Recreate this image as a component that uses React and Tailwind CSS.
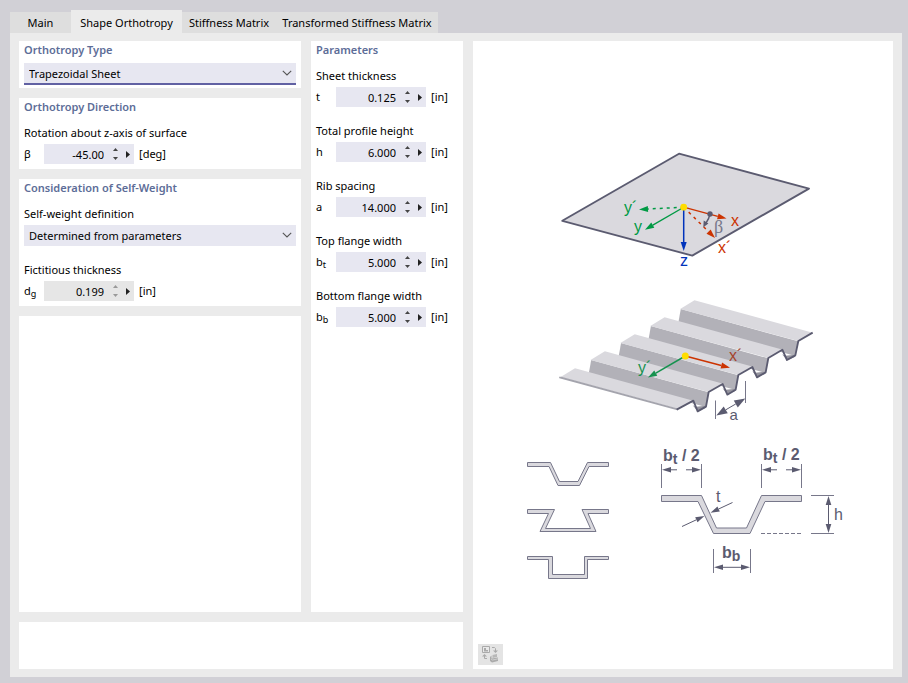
import React, { useId } from "react";
import clsx from "clsx";

const tabs = [
  { label: "Main", width: "w-[61px]" },
  { label: "Shape Orthotropy", width: "w-[111px]", active: true },
  { label: "Stiffness Matrix", width: "w-[94px]" },
  { label: "Transformed Stiffness Matrix", width: "w-[162px]" },
];

const parameters = [
  { label: "Sheet thickness", symbol: "t", value: "0.125" },
  { label: "Total profile height", symbol: "h", value: "6.000" },
  { label: "Rib spacing", symbol: "a", value: "14.000" },
  { label: "Top flange width", symbol: "b", sub: "t", value: "5.000" },
  { label: "Bottom flange width", symbol: "b", sub: "b", value: "5.000" },
];

function Card({ title, className, children }) {
  return (
    <section className={clsx("bg-white px-[5px]", className)}>
      {title && <h2 className="h-[18px] font-semibold leading-[18px] text-[#5d6d98]">{title}</h2>}
      {children}
    </section>
  );
}

function NumberField({ label, symbol, sub, value, unit = "in", disabled }) {
  const id = useId();
  return (
    <div className="flex flex-col gap-[3px]">
      <label htmlFor={id} className="h-4 leading-4">{label}</label>
      <div className="flex h-5 items-center">
        <span className="flex w-5 shrink-0 items-baseline">
          {symbol}
          {sub && <span className="pt-[2px] text-[9px] leading-none translate-y-[2px]">{sub}</span>}
        </span>
        <div className={clsx("flex h-5 w-[90px] items-center", disabled ? "bg-[#e6e6e6]" : "bg-[#e7e7f1]")}>
          <input id={id} defaultValue={value} readOnly={disabled} className="h-5 w-[60px] bg-transparent pt-px text-right outline-none" />
          <span className="ml-[9px] flex h-5 w-[5px] flex-col items-center justify-center gap-[6px]">
            <button aria-label={`Increase ${label}`} className="block">
              <svg width="5" height="3" viewBox="0 0 5 3" className="block"><path d="M2.5 0 5 3H0Z" fill={disabled ? "#999" : "#444"} /></svg>
            </button>
            <button aria-label={`Decrease ${label}`} className="block">
              <svg width="5" height="3" viewBox="0 0 5 3" className="block"><path d="M2.5 3 5 0H0Z" fill={disabled ? "#999" : "#444"} /></svg>
            </button>
          </span>
          <button aria-label={`Options for ${label}`} className="ml-2 block">
            <svg width="4" height="7" viewBox="0 0 4 7" className="block"><path d="M0 0 4 3.5 0 7Z" fill="#222" /></svg>
          </button>
        </div>
        <span className="ml-[5px]">[{unit}]</span>
      </div>
    </div>
  );
}

function Dropdown({ id, value, focused, label }) {
  return (
    <div className={clsx("relative bg-[#e7e7f1]", focused ? "h-[22px] border-b-2 border-[#6161a3]" : "h-[21px]")}>
      <select id={id} aria-label={label} className="block h-full w-full appearance-none bg-transparent pl-[5px] pr-6 pt-[2px] outline-none">
        <option>{value}</option>
      </select>
      <svg width="10" height="6" viewBox="0 0 10 6" className="pointer-events-none absolute right-1 top-[7px]">
        <path d="M.8.8 5 5 9.2.8" fill="none" stroke="#555" strokeWidth="1.1" />
      </svg>
    </div>
  );
}

function Arrow({ from, to, color, size = 9, half = 3, dash, width = 1.3 }) {
  const dx = to[0] - from[0];
  const dy = to[1] - from[1];
  const len = Math.hypot(dx, dy);
  const ux = dx / len;
  const uy = dy / len;
  const bx = to[0] - ux * size;
  const by = to[1] - uy * size;
  return (
    <g>
      <line x1={from[0]} y1={from[1]} x2={bx} y2={by} stroke={color} strokeWidth={width} strokeDasharray={dash} />
      <polygon points={`${to[0]},${to[1]} ${bx - uy * half},${by + ux * half} ${bx + uy * half},${by - ux * half}`} fill={color} />
    </g>
  );
}

const INK = "#5b5b70";
const GREEN = "#009a44";
const RED = "#cc3300";
const BLUE = "#0033bb";

function Plate() {
  return (
    <g>
      <polygon points="562.3,220.8 679,153.7 809,188.6 692.3,255.6" fill="#dad9de" stroke={INK} strokeWidth="1.9" strokeLinejoin="round" />
      <Arrow from={[683.7, 207.2]} to={[639, 209.4]} color={GREEN} dash="3 4" width={1.5} />
      <Arrow from={[683.7, 207.2]} to={[645, 229.7]} color={GREEN} />
      <Arrow from={[683.7, 207.2]} to={[715, 238]} color={RED} dash="3 4" width={1.5} />
      <Arrow from={[683.7, 207.2]} to={[726.5, 218.6]} color={RED} />
      <Arrow from={[683.7, 207.2]} to={[683.7, 251]} color={BLUE} width={1.5} />
      <circle cx="710" cy="214" r="2.7" fill={INK} />
      <path d="M710 214Q709 219 706 223" fill="none" stroke={INK} strokeWidth="1.4" />
      <path d="M703.3 227.3 703.7 220.5 708.4 223.4Z" fill={INK} />
      <circle cx="683.7" cy="207.2" r="3.4" fill="#ffdd00" />
      <g fontSize="16">
        <text x="624" y="213" fill={GREEN}>y´</text>
        <text x="634" y="232" fill={GREEN}>y</text>
        <text x="731" y="226" fill={RED}>x</text>
        <text x="718" y="253" fill={RED}>x´</text>
        <text x="680" y="266" fill={BLUE}>z</text>
        <text x="714" y="233" fill="#77778a" fontSize="18" className="font-['Liberation_Serif',serif]">β</text>
      </g>
    </g>
  );
}

const ribs = [4, 3, 2, 1, 0];

function RibbedSheet() {
  return (
    <g>
      <g transform="translate(550 290) scale(.33333)">
        {ribs.map((k) => (
          <g key={k} transform={`translate(${k * 89.6} ${k * -51})`}>
            {k > 0 && <polygon points="34,261 386,358 378,402 26,305" fill="#b2b1b8" />}
            <polygon points="32,261 75,235 430,332 386,357" fill="#dad9de" />
          </g>
        ))}
        {[0, 1, 2, 3].map((k) => (
          <polygon key={k} transform={`translate(${k * 89.4} ${k * -51})`} points="428,346 437,350 469,347 466,354 443,364" fill="#94939d" />
        ))}
        <polygon points="27,260 34,260 386,356 382,361 28,265" fill="#a4a4ad" />
        <polyline
          points="380,359 430,332 443,364 468,350 476,306 518,282 532,314 557,299 565,255 607,231 621,262 647,247 655,204 697,179 711,210 736,196 745,153 788,128"
          fill="none" stroke={INK} strokeWidth="5.5" strokeLinejoin="round"
        />
      </g>
      <Arrow from={[685.3, 356]} to={[730, 367.8]} color={RED} width={1.6} />
      <Arrow from={[685.3, 356]} to={[648, 377.6]} color="#16924f" width={1.5} />
      <circle cx="685.3" cy="356" r="3.5" fill="#ffdd00" />
      <text x="638" y="373" fontSize="16" fill="#16924f">y´</text>
      <text x="729" y="361" fontSize="16" fill="#a5432c">x´</text>
      <path d="M715.5 400.5V419M745.5 381V403" stroke="#77778a" />
      <Arrow from={[730, 407.3]} to={[716.3, 415.5]} color={INK} size={11} half={4} width={1} />
      <Arrow from={[730, 407.3]} to={[745.3, 398.5]} color={INK} size={11} half={4} width={1} />
      <text x="729.5" y="420" fontSize="15" fill={INK}>a</text>
    </g>
  );
}

function Profiles() {
  return (
    <g fill="#dad9de" stroke="#77778a" strokeWidth="1">
      <path d="M527.5 462.5H550.5L559.5 481.5H578L587.5 462.5H608.5V466.5H589L579.5 485.5H558L549 466.5H527.5Z" />
      <path d="M527.5 509.5H554.5L545.5 528.5H590.5L582 509.5H608.5V513.5H588L596 531.5H540L548.5 513.5H527.5Z" />
      <path d="M527.5 556.5H552.5V574.5H584.5V556.5H608.5V559.5H587.5V578.5H548.5V559.5H527.5Z" />
    </g>
  );
}

function SectionDimensions() {
  return (
    <g>
      <path d="M661.5 495.5H701.5L716.5 528H746.5L761.5 495.5H801.5V501.5H765L750 533.5H713.5L698 501.5H661.5Z" fill="#dad9de" stroke="#77778a" />
      <path d="M661.5 464V488M701.5 464V488M761.5 464V488M801.5 464V488M713.5 549V573M750.5 549V573M811 495.5H834M811 533.5H834" fill="none" stroke="#77778a" />
      <path d="M761 533.5H801" stroke="#77778a" strokeDasharray="4 2" />
      <Arrow from={[677, 469.8]} to={[662, 469.8]} color={INK} width={1} half={2.8} />
      <Arrow from={[686, 469.8]} to={[701, 469.8]} color={INK} width={1} half={2.8} />
      <Arrow from={[777, 469.8]} to={[762, 469.8]} color={INK} width={1} half={2.8} />
      <Arrow from={[786, 469.8]} to={[801, 469.8]} color={INK} width={1} half={2.8} />
      <Arrow from={[732, 567.3]} to={[714, 567.3]} color={INK} width={1} half={2.8} />
      <Arrow from={[732, 567.3]} to={[750, 567.3]} color={INK} width={1} half={2.8} />
      <Arrow from={[828.5, 515]} to={[828.5, 496]} color={INK} width={1} half={2.8} />
      <Arrow from={[828.5, 515]} to={[828.5, 533]} color={INK} width={1} half={2.8} />
      <Arrow from={[732.5, 502.5]} to={[710.5, 512.8]} color={INK} width={1} half={2.8} />
      <Arrow from={[682, 526.5]} to={[704.5, 516]} color={INK} width={1} half={2.8} />
      <g fill={INK} fontSize="16">
        <g fontWeight="bold">
          <text x="663" y="461">b<tspan dy="3" fontSize="14">t</tspan><tspan dy="-3"> / 2</tspan></text>
          <text x="763" y="460">b<tspan dy="3" fontSize="14">t</tspan><tspan dy="-3"> / 2</tspan></text>
          <text x="722" y="558">b<tspan dy="3" fontSize="14">b</tspan></text>
        </g>
        <text x="716" y="502">t</text>
        <text x="834" y="520">h</text>
      </g>
    </g>
  );
}

export default function App() {
  return (
    <main className="flex h-screen min-h-[480px] flex-col bg-[#d1d0d6] pb-[6px] pl-[10px] pr-[6px] pt-[10px] font-['Noto_Sans','Open_Sans',sans-serif] text-[11px] text-black">
      <nav role="tablist" className="flex h-[23px] items-end">
        {tabs.map((tab) => (
          <button
            key={tab.label}
            role="tab"
            aria-selected={!!tab.active}
            className={clsx("whitespace-nowrap text-center", tab.width, tab.active ? "h-[23px] bg-[#ebebeb] pt-[3px]" : "h-[21px] bg-[#dedede] pt-px")}
          >
            {tab.label}
          </button>
        ))}
      </nav>
      <div className="grid min-h-0 flex-1 grid-cols-[444px_minmax(0,1fr)] gap-[10px] bg-[#ebebeb] px-[9px] py-2">
        <div className="flex min-h-0 flex-col gap-[10px]">
          <div className="grid min-h-0 flex-1 grid-cols-[minmax(0,1fr)_152px] gap-[10px]">
            <div className="flex flex-col gap-[10px]">
              <Card title="Orthotropy Type" className="pb-[3px]">
                <div className="pt-1">
                  <Dropdown label="Orthotropy Type" value="Trapezoidal Sheet" focused />
                </div>
              </Card>
              <Card title="Orthotropy Direction" className="pb-[5px]">
                <div className="pt-[9px]">
                  <NumberField label="Rotation about z-axis of surface" symbol="β" value="-45.00" unit="deg" />
                </div>
              </Card>
              <Card title="Consideration of Self-Weight" className="pb-[5px]">
                <div className="flex flex-col gap-4 pt-[9px]">
                  <div className="flex flex-col gap-[3px]">
                    <label htmlFor="self-weight" className="h-4 leading-4">Self-weight definition</label>
                    <Dropdown id="self-weight" value="Determined from parameters" />
                  </div>
                  <NumberField label="Fictitious thickness" symbol="d" sub="g" value="0.199" disabled />
                </div>
              </Card>
              <Card className="flex-1" />
            </div>
            <Card title="Parameters">
              <div className="flex flex-col gap-4 pt-[9px]">
                {parameters.map((p) => <NumberField key={p.label} {...p} />)}
              </div>
            </Card>
          </div>
          <Card className="h-[47px]" />
        </div>
        <section className="flex min-h-0 flex-col bg-white">
          <svg viewBox="473 41 420 603" className="min-h-0 w-full flex-1 font-['Liberation_Sans',sans-serif]" role="img" aria-label="Trapezoidal sheet geometry">
            <Plate />
            <RibbedSheet />
            <Profiles />
            <SectionDimensions />
          </svg>
          <div className="px-[5px] pb-1">
            <button aria-label="Switch picture" className="flex h-[21px] w-[25px] items-center justify-center bg-[#e4e4e4]">
              <svg width="17" height="17" viewBox="0 0 17 17">
                <path d="M.5.5H7.5V6.5H.5Z" fill="#e9e9e9" stroke="#aaa" />
                <path d="M2 2H4V4H6V5.500H2Z" fill="#aaa" />
                <path d="M10 1.500H12.500L13.500 2.500V5" fill="none" stroke="#aaa" />
                <path d="M11 4.500H16L13.500 7Z" fill="#aaa" />
                <path d="M2.500 10V12.500H5" fill="none" stroke="#aaa" />
                <path d="M0 10.500H5L2.500 8Z" fill="#aaa" />
                <path d="M10.500 9 15 8V11L10.500 12Z" fill="#b8b8b8" />
                <path d="M8 11 9.500 9.500V12.500L16 11.500V15L10 16.500 8 15Z" fill="#aaa" />
                <path d="M9 13 10.500 14 16 12.800" fill="none" stroke="#cfcfcf" />
              </svg>
            </button>
          </div>
        </section>
      </div>
    </main>
  );
}
